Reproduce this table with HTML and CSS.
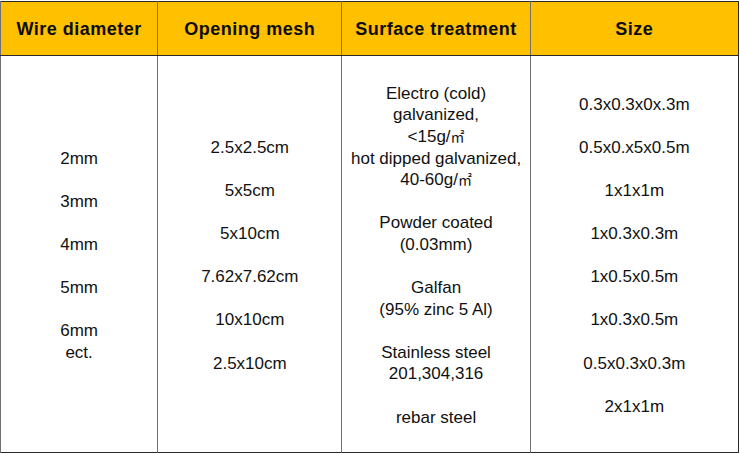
FILE: index.html
```html
<!DOCTYPE html>
<html>
<head>
<meta charset="utf-8">
<link rel="stylesheet" href="styles.css">
</head>
<body>
<table class="spec">
  <colgroup>
    <col class="c1"><col class="c2"><col class="c3"><col class="c4">
  </colgroup>
  <thead>
    <tr>
      <th>Wire diameter</th>
      <th>Opening mesh</th>
      <th>Surface treatment</th>
      <th>Size</th>
    </tr>
  </thead>
  <tbody>
    <tr>
      <td>
        <div class="stack">
          <p>2mm</p>
          <p>3mm</p>
          <p>4mm</p>
          <p>5mm</p>
          <p>6mm<br>ect.</p>
        </div>
      </td>
      <td>
        <div class="stack">
          <p>2.5x2.5cm</p>
          <p>5x5cm</p>
          <p>5x10cm</p>
          <p>7.62x7.62cm</p>
          <p>10x10cm</p>
          <p>2.5x10cm</p>
        </div>
      </td>
      <td>
        <div class="stack">
          <p>Electro (cold)<br>galvanized,<br>&lt;15g/<span class="sq">㎡</span><br>hot dipped galvanized,<br>40-60g/<span class="sq">㎡</span></p>
          <p>Powder coated<br>(0.03mm)</p>
          <p>Galfan<br>(95% zinc 5 Al)</p>
          <p>Stainless steel<br>201,304,316</p>
          <p>rebar steel</p>
        </div>
      </td>
      <td>
        <div class="stack">
          <p>0.3x0.3x0x.3m</p>
          <p>0.5x0.x5x0.5m</p>
          <p>1x1x1m</p>
          <p>1x0.3x0.3m</p>
          <p>1x0.5x0.5m</p>
          <p>1x0.3x0.5m</p>
          <p>0.5x0.3x0.3m</p>
          <p>2x1x1m</p>
        </div>
      </td>
    </tr>
  </tbody>
</table>
</body>
</html>
```

FILE: styles.css
```css
html, body {
  margin: 0;
  padding: 0;
  background: #ffffff;
}

body {
  font-family: "Liberation Sans", Arial, "Noto Sans CJK SC", sans-serif;
  color: #111111;
}

.spec {
  border-collapse: collapse;
  table-layout: fixed;
  width: 739px;
  margin-top: 1px;
  border: 1px solid #2a2a2a;
}

.c1 { width: 157px; }
.c2 { width: 184px; }
.c3 { width: 188px; }
.c4 { width: 208px; }

.spec th {
  background: #ffc000;
  height: 51px;
  padding: 2px 0 0 0;
  font-size: 18px;
  font-weight: bold;
  letter-spacing: 0.5px;
  color: #0d0d0d;
  text-align: center;
  vertical-align: middle;
  border-left: 1px solid #707070;
  border-bottom: 1px solid #2a2a2a;
}

.spec td {
  height: 396px;
  padding: 0;
  text-align: center;
  vertical-align: middle;
  border-left: 1px solid #707070;
  font-size: 17px;
  line-height: 21.6px;
}

.stack {
  display: flex;
  flex-direction: column;
  gap: 21.6px;
  padding-top: 3px;
}

.stack p {
  margin: 0;
}

.sq {
  font-family: "Noto Sans CJK SC", sans-serif;
  font-size: 14px;
}
```
